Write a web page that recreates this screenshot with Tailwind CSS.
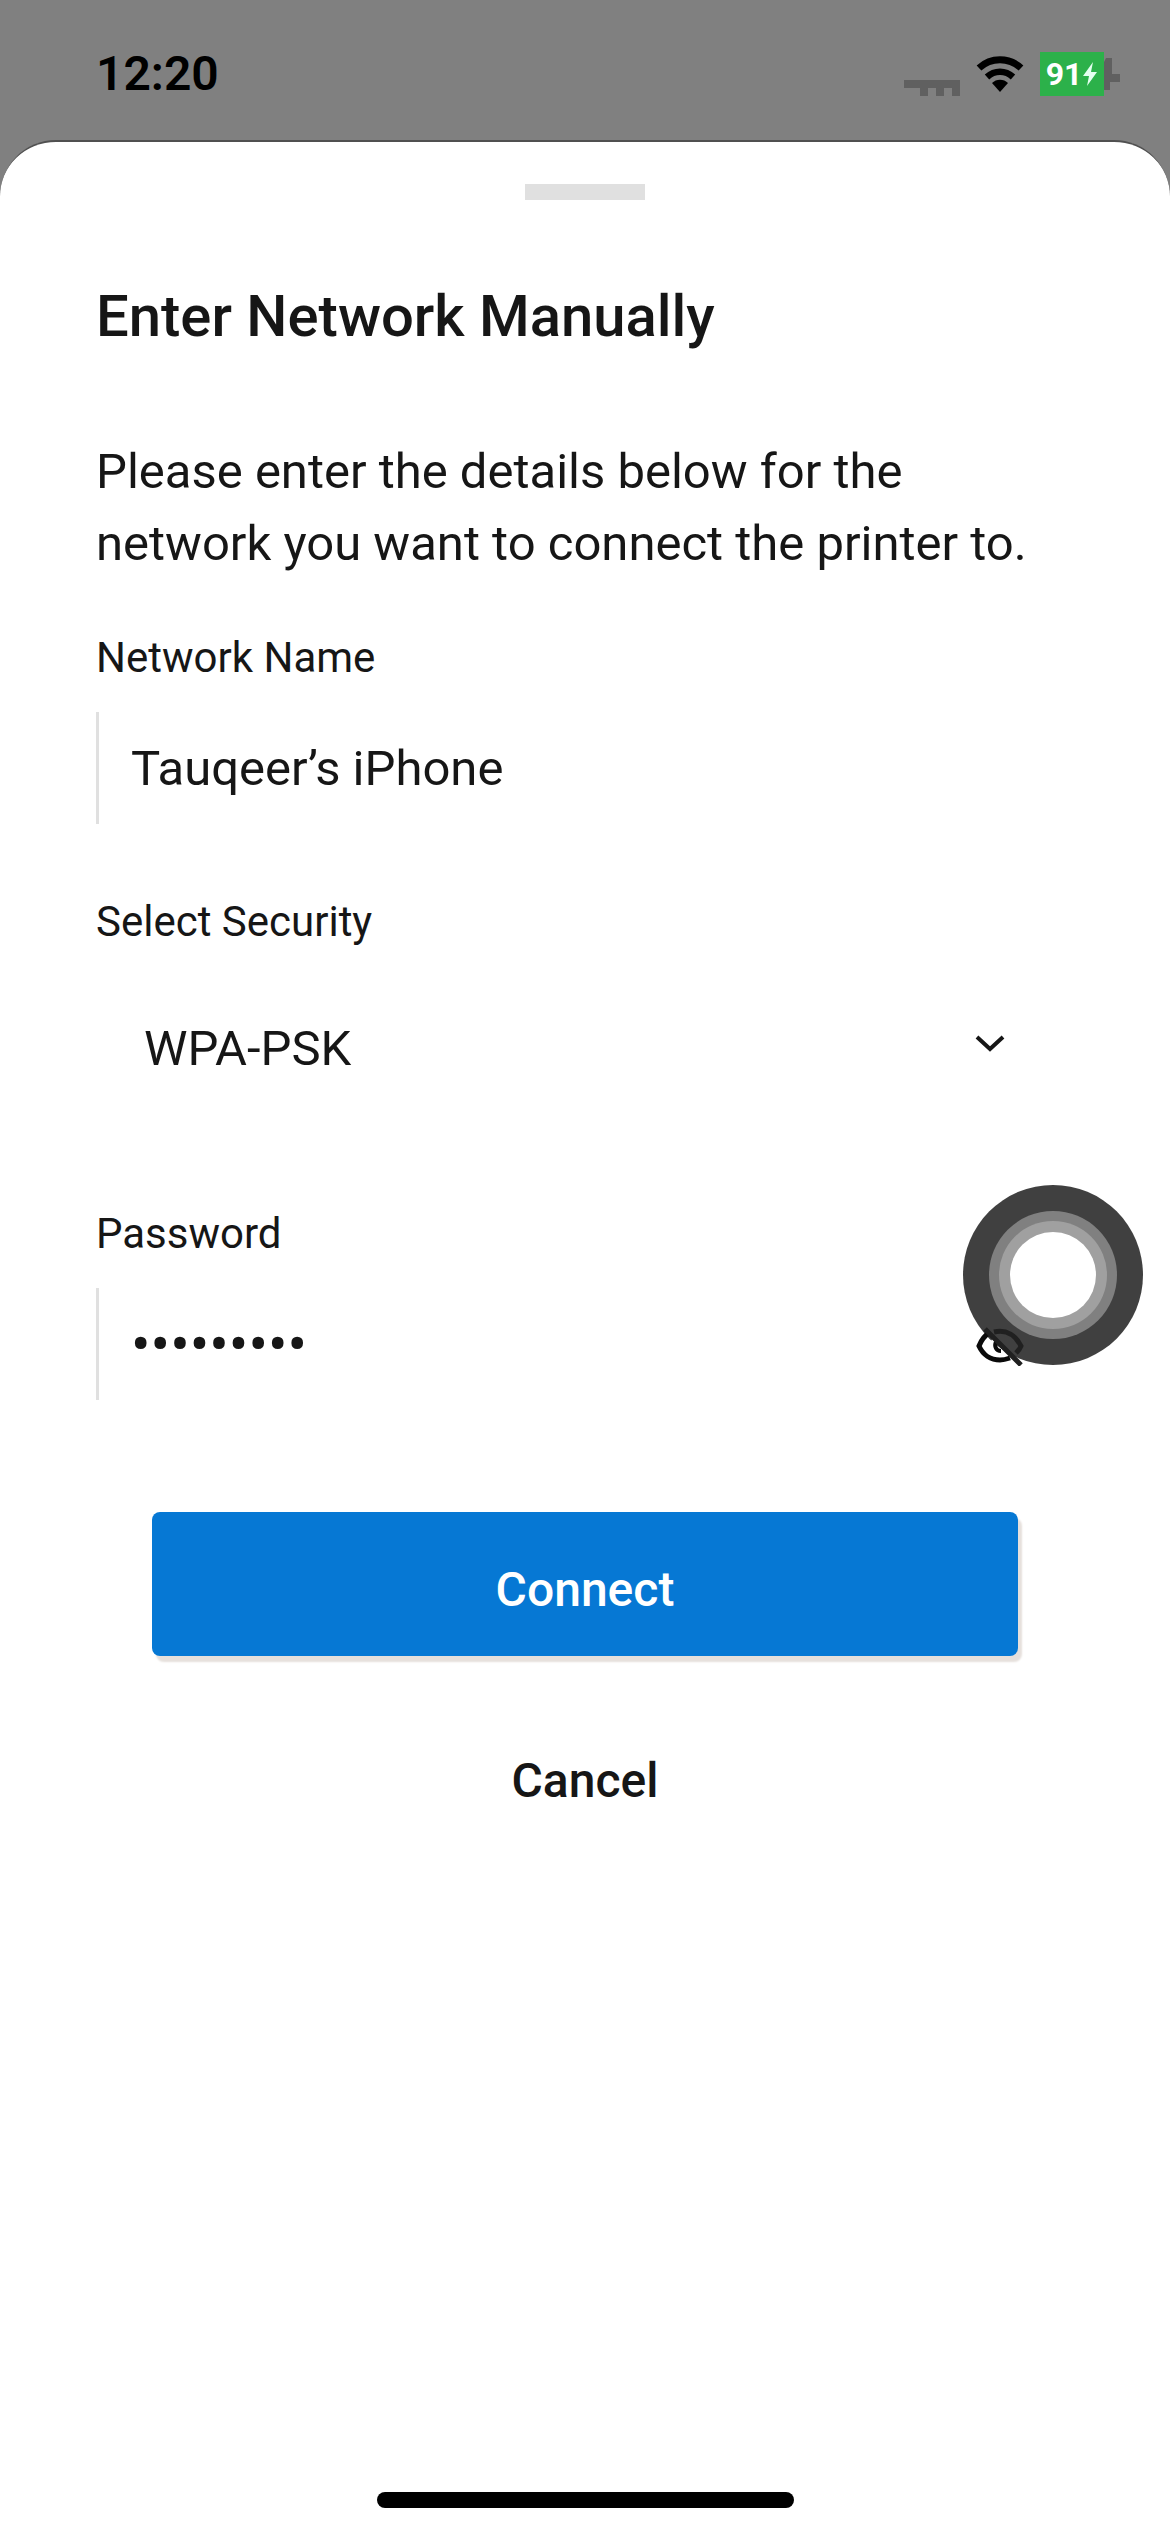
<!DOCTYPE html>
<html lang="en">
<head>
<meta charset="utf-8">
<meta name="viewport" content="width=device-width, initial-scale=1">
<title>Enter Network Manually</title>
<script src="https://cdn.jsdelivr.net/npm/@tailwindcss/browser@4"></script>
</head>
<body class="relative flex min-h-screen flex-col bg-[#808080] font-['Roboto',sans-serif] text-[#161616]">

<!-- Status bar -->
<header class="flex h-[140px] items-center justify-between pl-24 pr-[50px] pb-2 pt-4 text-black">
  <time class="text-[48px] leading-[56px] font-semibold">12:20</time>
  <div class="flex items-center gap-4">
    <svg class="h-4 w-14 self-end" viewBox="0 0 56 16" fill="#606060" aria-hidden="true"><path d="M0 0h56v16h-8V8h-8v8h-8V8h-8v8h-8V8H0z"/></svg>
    <svg class="h-9 w-12" viewBox="0 0 48 36" aria-hidden="true">
      <path d="M3 12C15 1 33 1 45 12" fill="none" stroke="#000" stroke-width="7"/>
      <path d="M11 21c7.500-7 18.500-7 26 0" fill="none" stroke="#000" stroke-width="6.500"/>
      <path d="M16 27c4-4.500 12-4.500 16 0l-8 9z" fill="#000"/>
    </svg>
    <div class="flex items-center">
      <div class="flex h-11 w-16 items-center justify-center bg-[#2cb14a] text-[32px] leading-10 font-bold text-white">91<svg class="h-7 w-4" viewBox="0 0 16 28" fill="#e4fff0" aria-hidden="true"><path d="M11 2 1 16h6L5 26l10-14H9z"/></svg></div>
      <svg class="h-8 w-4" viewBox="0 0 16 32" fill="#606060" aria-hidden="true"><path d="M2 0h6v16h8v8H6v8H0V4z"/></svg>
    </div>
  </div>
</header>

<!-- Bottom sheet -->
<main class="flex flex-1 flex-col rounded-t-[56px] border-t-2 border-[#505050] bg-white px-24 pb-6 pt-[42px]">
  <div class="h-4 w-[120px] self-center bg-[#e0e0e0]"></div>
  <h1 class="mt-20 text-[58px] leading-[72px] font-medium">Enter Network Manually</h1>
  <p class="mt-[84px] pr-10 text-[49px] leading-[72px]">Please enter the details below for the network you want to connect the printer to.</p>

  <form class="flex flex-col">
    <label for="ssid" class="mt-[50px] text-[42px] leading-[56px]">Network Name</label>
    <input id="ssid" type="text" value="Tauqeer’s iPhone" class="mt-[26px] h-28 w-full border-l-3 border-[#e0e0e0] bg-transparent pl-8 text-[49px] outline-none">

    <label for="security" class="mt-[70px] text-[42px] leading-[56px]">Select Security</label>
    <div class="relative mt-[26px]">
      <select id="security" class="h-[146px] w-full appearance-none bg-transparent pl-12 text-[49px] outline-none">
        <option>WPA-PSK</option>
      </select>
      <svg class="pointer-events-none absolute right-[68px] top-[58px] h-5 w-8" viewBox="0 0 32 20" fill="none" stroke="#161616" stroke-width="4" aria-hidden="true"><path d="M3 3l13 12L29 3"/></svg>
    </div>

    <label for="password" class="mt-[84px] text-[42px] leading-[56px]">Password</label>
    <div class="relative mt-[26px]">
      <input id="password" type="password" value="123456789" class="block h-28 w-full border-l-3 border-[#e0e0e0] bg-transparent pl-8 text-[58px] outline-none">
      <button type="button" aria-label="Show password" class="absolute right-[50px] top-[38px] z-20">
        <svg class="block h-10 w-12" viewBox="0 0 48 40" fill="none" stroke="#0a0a0a" stroke-width="5" aria-hidden="true">
          <path d="M13 7C8 10 5 15 3 20c4 9 12 14 21 14 4 0 7-1 10-2"/>
          <path d="M18 14c-4 5-2 13 6 14 2 0 4 0 6-2" stroke="#fff" stroke-width="4"/>
          <path d="M20 16c-2 4 0 9 5 9" stroke-width="4"/>
          <path d="M18 6c13-3 22 4 27 14-1 3-3 5-5 7M9 3l36 36" stroke="#202020"/>
        </svg>
      </button>
    </div>

    <div class="mt-28 flex flex-col gap-[53px] px-14">
      <button type="submit" class="h-36 rounded-lg bg-[#0678d4] pt-3 text-[48px] font-medium text-white shadow-[4px_6px_2px_#e6e0dc]">Connect</button>
      <button type="button" class="h-36 text-[48px] font-medium">Cancel</button>
    </div>
  </form>

  <div class="mt-auto h-4 w-[417px] self-center rounded-full bg-black"></div>
</main>

<!-- Floating assistive button -->
<button type="button" aria-label="Assistive touch" class="absolute right-[27px] top-[1185px] z-10 flex size-[180px] items-center justify-center rounded-full bg-[#404040]">
  <span class="flex size-[128px] items-center justify-center rounded-full bg-[#808080]">
    <span class="flex size-[108px] items-center justify-center rounded-full bg-[#a0a0a0]">
      <span class="size-[86px] rounded-full bg-white"></span>
    </span>
  </span>
</button>
</body>
</html>
